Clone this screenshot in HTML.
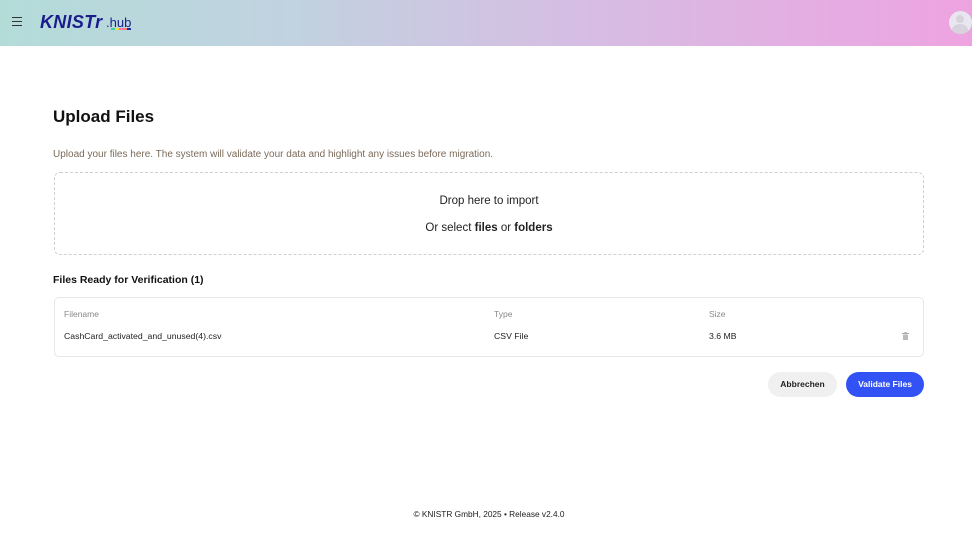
<!DOCTYPE html>
<html><head><meta charset="utf-8"><style>
*{box-sizing:border-box;margin:0;padding:0}
body{width:972px;height:539px;background:#fff;font-family:"Liberation Sans",sans-serif;color:#1a1a1a;position:relative;overflow:hidden}
.hdr{position:absolute;left:0;top:0;width:972px;height:46px;background:linear-gradient(90deg,#b3dcd9 0%,#c1d2e0 30%,#d6bde3 60%,#eea3e1 100%)}
.abs{position:absolute}
</style></head><body>
<div class="hdr">
 <div class="abs" style="left:12px;top:17px;width:10px;height:1.3px;background:#333;box-shadow:0 4px 0 #333,0 8px 0 #333"></div>
 <div class="abs" style="left:40px;top:12px;font-size:18px;font-weight:bold;font-style:italic;color:#1b1c8c;letter-spacing:0.3px">KNISTr</div>
 <div class="abs" style="left:106px;top:15px;font-size:13px;color:#1b1c8c">.hub</div>
 <div class="abs" style="left:111px;top:28px;width:20px;height:2px;background:linear-gradient(90deg,#3ad29f 0 20%,#f6d545 20% 40%,#f57ab0 40% 60%,#f77 60% 80%,#2a2aa0 80%)"></div>
 <div class="abs" style="left:949px;top:11px;width:23px;height:23px;border-radius:50%;background:#e9e6ef;overflow:hidden">
  <div class="abs" style="left:7px;top:4px;width:8px;height:8px;border-radius:50%;background:#d6d3dd"></div>
  <div class="abs" style="left:3px;top:13px;width:16px;height:12px;border-radius:50%;background:#d6d3dd"></div>
 </div>
</div>
<div class="abs" style="left:53px;top:107px;font-size:17px;font-weight:bold;color:#111">Upload Files</div>
<div class="abs" style="left:53px;top:149px;font-size:10px;color:#7b6b5b">Upload your files here. The system will validate your data and highlight any issues before migration.</div>
<div class="abs" style="left:54px;top:172px;width:870px;height:83px;border:1px dashed #cfcfcf;border-radius:6px"></div>
<div class="abs" style="left:54px;top:195px;width:870px;text-align:center;font-size:11.5px;color:#222">Drop here to import</div>
<div class="abs" style="left:54px;top:222px;width:870px;text-align:center;font-size:11.5px;color:#222">Or select <b>files</b> or <b>folders</b></div>
<div class="abs" style="left:53px;top:274px;font-size:10.5px;font-weight:bold;color:#111">Files Ready for Verification (1)</div>
<div class="abs" style="left:54px;top:297px;width:870px;height:60px;border:1px solid #e6e6e6;border-radius:5px"></div>
<div class="abs" style="left:64px;top:309px;font-size:8.5px;color:#888">Filename</div>
<div class="abs" style="left:494px;top:309px;font-size:8.5px;color:#888">Type</div>
<div class="abs" style="left:709px;top:309px;font-size:8.5px;color:#888">Size</div>
<div class="abs" style="left:64px;top:331px;font-size:8.7px;color:#222">CashCard_activated_and_unused(4).csv</div>
<div class="abs" style="left:494px;top:331px;font-size:8.7px;color:#222">CSV File</div>
<div class="abs" style="left:709px;top:331px;font-size:8.7px;color:#222">3.6 MB</div>
<svg class="abs" style="left:902px;top:332px" width="7" height="8" viewBox="0 0 7 8"><rect x="0" y="1" width="7" height="1" fill="#aaa"/><rect x="2.5" y="0" width="2" height="1" fill="#aaa"/><rect x="1" y="2.5" width="5" height="5.5" rx="0.5" fill="#bbb"/></svg>
<div class="abs" style="left:768px;top:372px;width:69px;height:25px;border-radius:13px;background:#f0f0f0;font-size:8.5px;font-weight:bold;line-height:25px;text-align:center;color:#222">Abbrechen</div>
<div class="abs" style="left:846px;top:372px;width:78px;height:25px;border-radius:13px;background:#3352f6;font-size:8.5px;font-weight:bold;line-height:25px;text-align:center;color:#fff">Validate Files</div>
<div class="abs" style="left:0;top:509px;width:978px;text-align:center;font-size:8.3px;color:#222">© KNISTR GmbH, 2025 • Release v2.4.0</div>
</body></html>
